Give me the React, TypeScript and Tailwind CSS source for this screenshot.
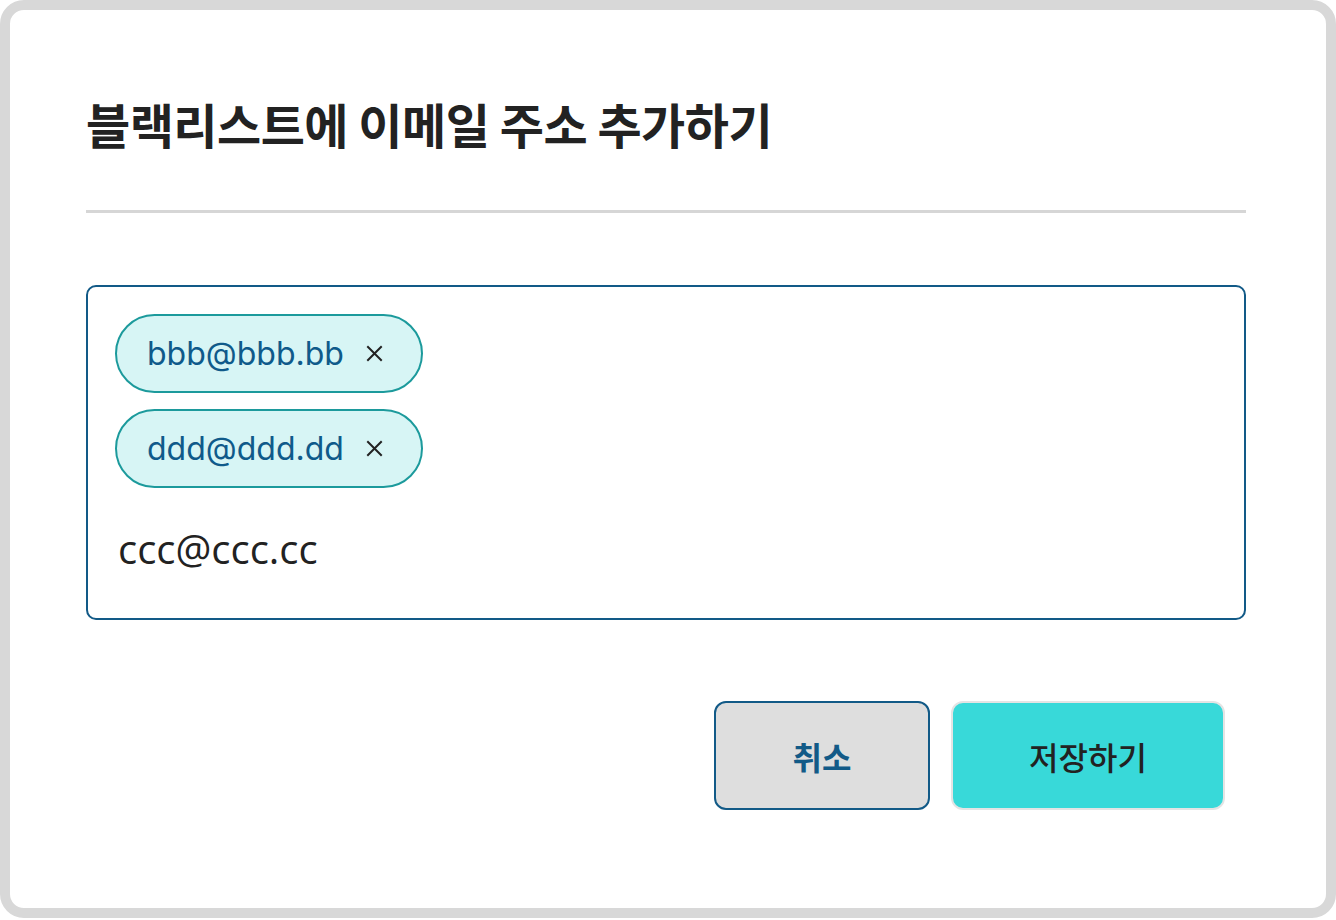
import React from "react";

const X = () => (
  <svg width="17" height="17" viewBox="0 0 17 17" className="shrink-0">
    <path d="M2 2 L15 15 M15 2 L2 15" stroke="#222" strokeWidth="2" strokeLinecap="square" />
  </svg>
);

const Chip = ({ text }: { text: string }) => (
  <div className="flex h-[79px] items-center rounded-full border-2 border-[#1c9a9c] bg-[#d7f5f5] pl-[30px] pr-[38px]">
    <span className="text-[32px] leading-none text-[#0f5a8a] [font-family:Inter,'Noto_Sans',sans-serif]">{text}</span>
    <span className="ml-[22px] flex items-center">
      <X />
    </span>
  </div>
);

export default function App() {
  return (
    <div className="h-[920px] w-[1336px] bg-white [font-family:'Noto_Sans_CJK_KR','Noto_Sans',sans-serif]">
      <div className="flex h-[918px] w-[1336px] flex-col rounded-[24px] border-[10px] border-[#d8d8d8] bg-white pl-[76px] pr-[80px]">
        <h1 className="mt-[85px] text-[48px] font-bold leading-[56px] tracking-[-0.5px] text-[#222]">
          블랙리스트에 이메일 주소 추가하기
        </h1>
        <div className="mt-[59px] h-[3px] w-full bg-[#d6d6d6]" />
        <div className="mt-[72px] flex h-[335px] flex-col items-start rounded-[10px] border-2 border-[#125a87] p-[27px]">
          <div className="flex flex-col items-start gap-4">
            <Chip text="bbb@bbb.bb" />
            <Chip text="ddd@ddd.dd" />
          </div>
          <div className="mt-[36px] pl-[3px] text-[40px] leading-[50px] text-[#222] [font-family:'Open_Sans','Noto_Sans',sans-serif]">
            ccc@ccc.cc
          </div>
        </div>
        <div className="mt-[81px] flex justify-end gap-[21px] pr-[21px]">
          <button className="flex h-[109px] w-[216px] items-center justify-center rounded-[12px] border-2 border-[#125a87] bg-[#dedede] text-[32px] font-bold text-[#125a87]">
            취소
          </button>
          <button className="flex h-[109px] w-[274px] items-center justify-center rounded-[12px] border-2 border-[#e4e4e4] bg-[#38d9d9] text-[32px] font-medium text-[#222]">
            저장하기
          </button>
        </div>
      </div>
    </div>
  );
}
